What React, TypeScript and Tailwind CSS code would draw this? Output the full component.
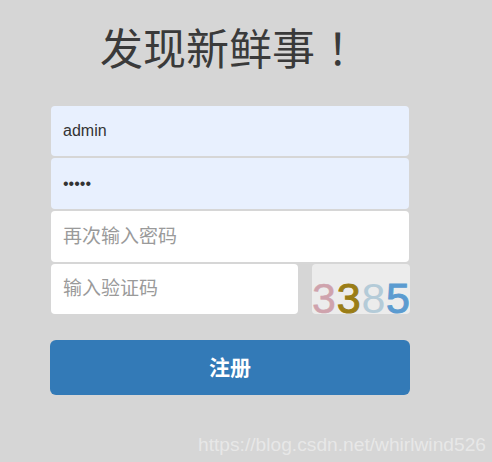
import React from 'react';

const cjk = "font-['Liberation_Sans','Noto_Sans_CJK_SC',sans-serif]";

const Digit: React.FC<{ value: string; className: string }> = ({ value, className }) => (
  <span className={`text-[43px] leading-[43px] h-[43px] ${className}`}>{value}</span>
);

export default function App() {
  return (
    <div className={`relative w-[492px] h-[462px] overflow-hidden bg-[#d6d6d6] ${cjk}`}>
      <div className="w-[360px] ml-[50px] flex flex-col">
        <h1 className="mt-[21px] h-[58px] pl-[50px] text-[43px] leading-[58px] font-normal text-[#3a3a3a] whitespace-nowrap">
          发现新鲜事<span className="ml-[12px]">！</span>
        </h1>

        <form className="mt-[27px] flex flex-col gap-[2px]">
          <input
            readOnly
            value="admin"
            className="ml-px w-[358px] h-[50px] px-3 rounded-[4px] bg-[#e8f0fe] text-[16px] text-[#333] outline-none"
          />
          <input
            readOnly
            type="password"
            value="admin"
            className="ml-px w-[358px] h-[51px] px-3 rounded-[4px] bg-[#e8f0fe] text-[16px] text-[#333] outline-none"
          />
          <input
            readOnly
            placeholder="再次输入密码"
            className="ml-px w-[358px] h-[51px] px-3 rounded-[4px] bg-white text-[19px] placeholder:text-[#9a9a9a] outline-none"
          />
          <div className="ml-px flex items-start gap-[14px]">
            <input
              readOnly
              placeholder="输入验证码"
              className="w-[247px] h-[50px] px-3 pb-[1px] rounded-[4px] bg-white text-[19px] placeholder:text-[#9a9a9a] outline-none"
            />
            <div className="w-[98px] h-[50px] pt-[13px] rounded-[4px] bg-[#ececec] flex items-start justify-between">
              <Digit value="3" className="text-[#cfa3ad] [-webkit-text-stroke:0.5px_#cfa3ad]" />
              <Digit value="3" className="text-[#9a7d16] [-webkit-text-stroke:1px_#9a7d16]" />
              <Digit value="8" className="text-[#b4cbd8]" />
              <Digit value="5" className="text-[#5b9bd0] [-webkit-text-stroke:1px_#5b9bd0]" />
            </div>
          </div>

          <button
            type="button"
            className="mt-[24px] w-[360px] h-[55px] rounded-[6px] bg-[#337ab7] text-white text-[21px] font-bold"
          >
            注册
          </button>
        </form>
      </div>

      <span className="absolute left-[198px] top-[433px] text-[19.2px] leading-[24px] text-white/45 whitespace-nowrap">
        https://blog.csdn.net/whirlwind526
      </span>
    </div>
  );
}
